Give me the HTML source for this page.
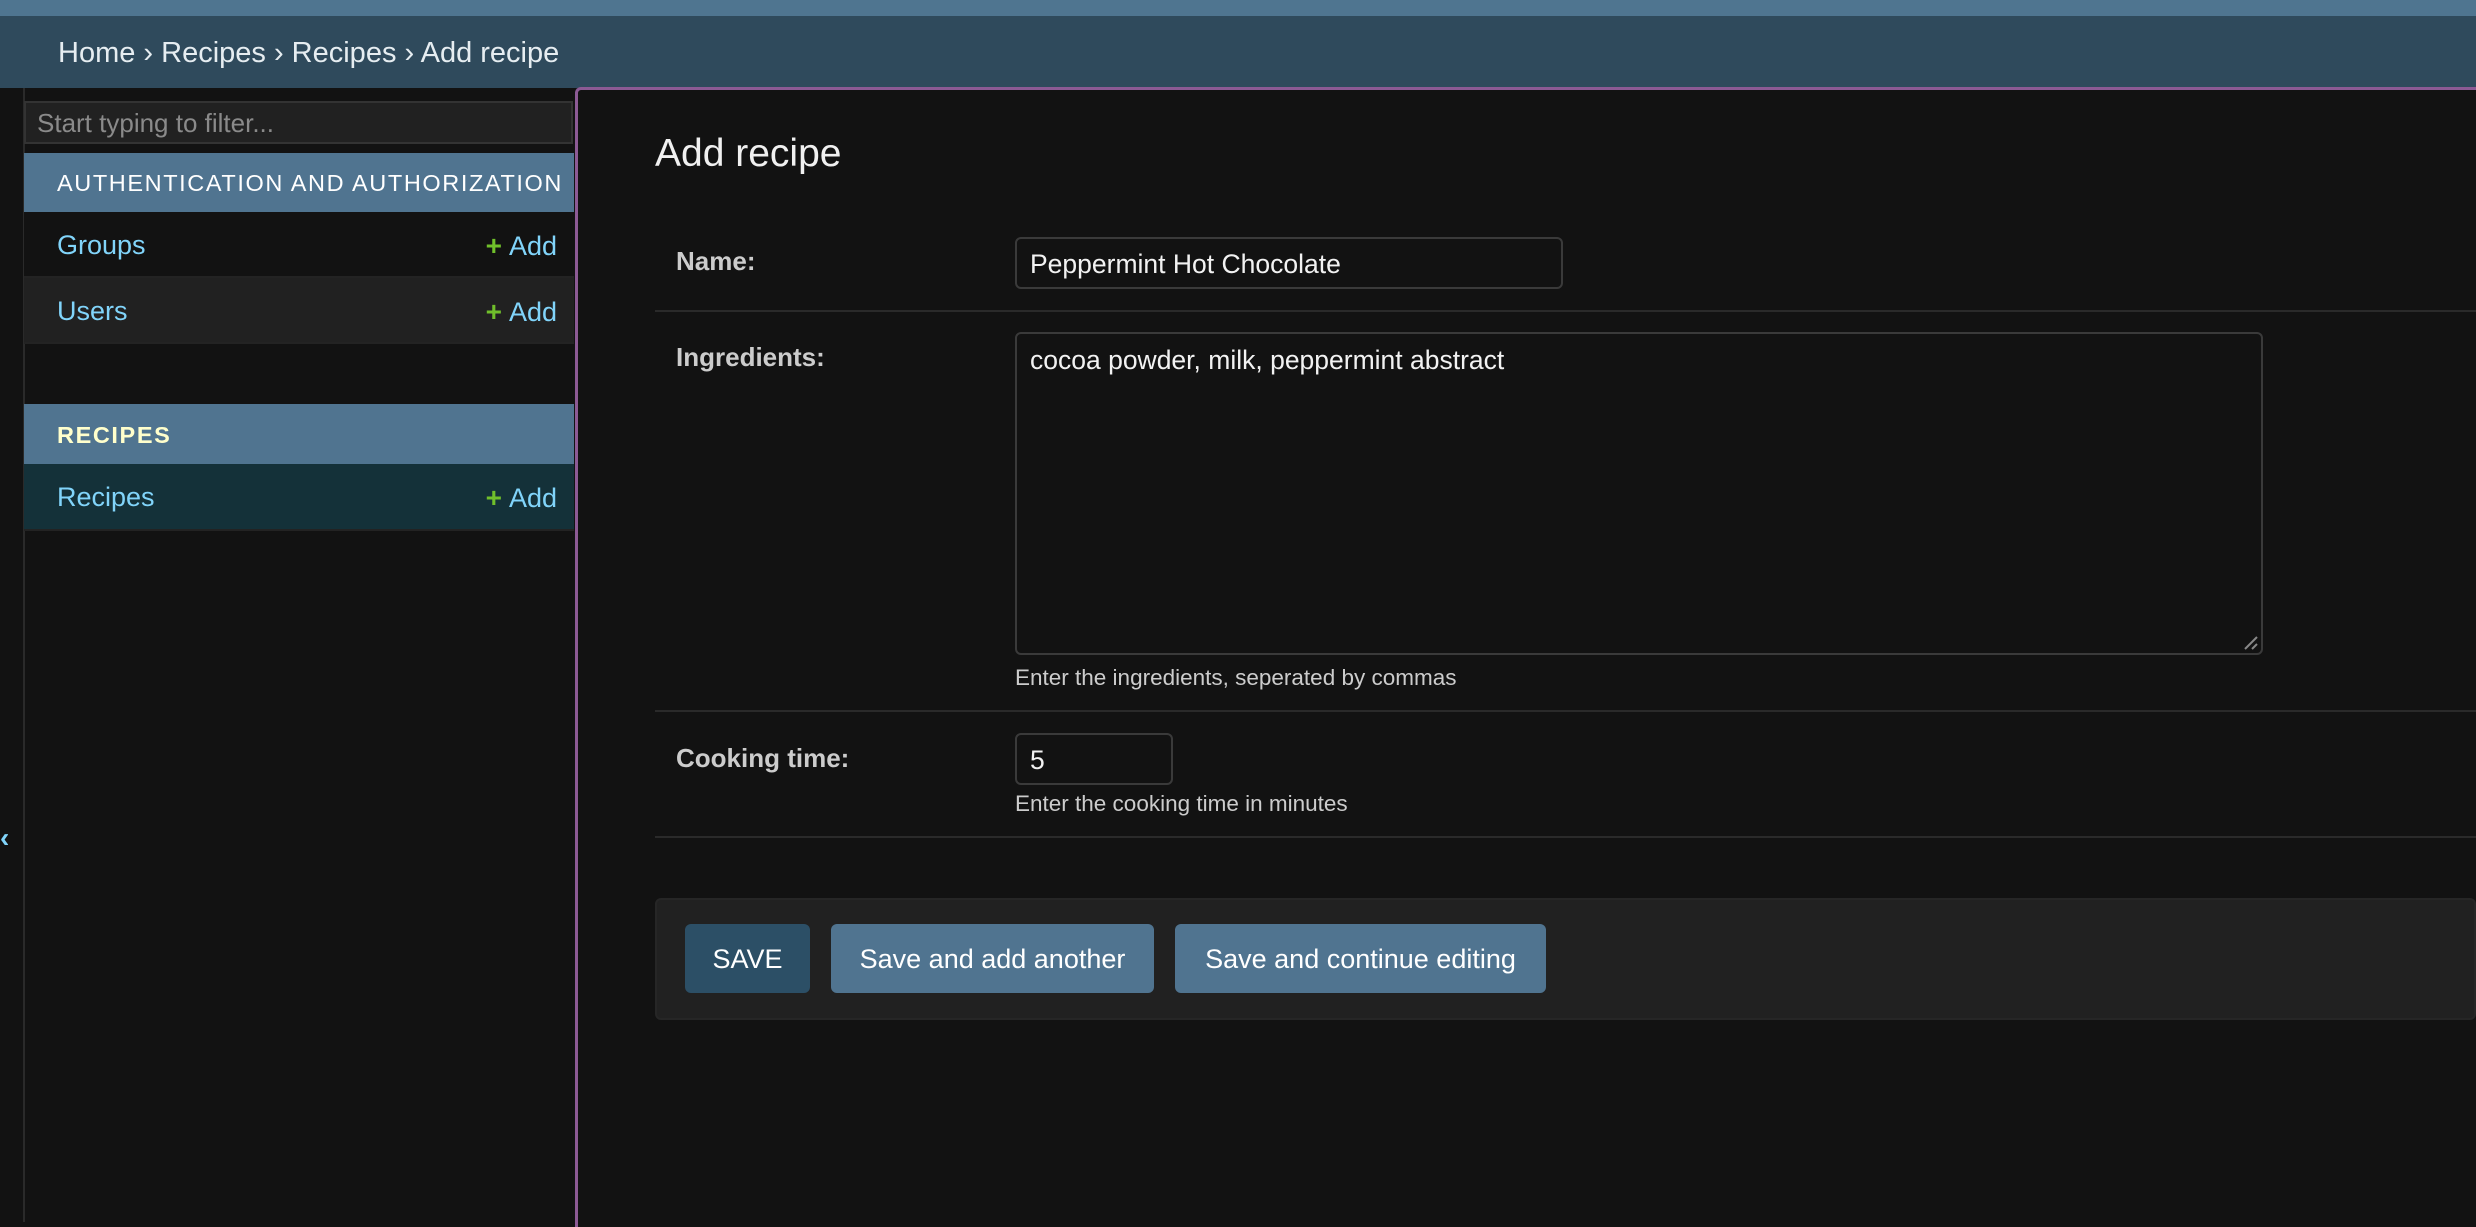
<!DOCTYPE html>
<html><head><meta charset="utf-8">
<style>
*{box-sizing:border-box;margin:0;padding:0}
html,body{width:2476px;height:1222px;overflow:hidden;background:#121212;font-family:"Liberation Sans",sans-serif;color:#eee}
.abs{position:absolute}
.top{left:0;top:0;width:2476px;height:16px;background:#4f7590}
.crumbs{left:0;top:16px;width:2476px;height:72px;background:#2f4a5c;color:#e6edf1;font-size:29px;line-height:74px;padding-left:58px}
.vline{left:23px;top:88px;width:2px;height:1134px;background:#2a2a2a}
.filter{left:24px;top:101px;width:549px;height:43px;background:#212121;border:2px solid #333;color:#8a8a8a;font-size:26px;line-height:41px;padding-left:11px}
.hdr{left:24px;width:550px;background:#507490;color:#fff;font-size:23.5px;letter-spacing:1.6px;padding-left:33px}
.row{left:24px;width:550px;font-size:27px;color:#81d4fa;padding-left:33px;border-bottom:2px solid #232323}
.row .add{position:absolute;right:17px;top:0;color:#81d4fa}
.row .add b{color:#70bf2b;font-size:28px;font-weight:bold;margin-right:7px;position:relative;top:0}
.main{left:575px;top:87px;width:1910px;height:1140px;border-left:3px solid #8c5a94;border-top:3px solid #8c5a94;border-top-left-radius:6px;background:#121212}
h1{position:absolute;left:655px;top:132px;font-size:39px;font-weight:normal;color:#f0f0f0}
.lbl{position:absolute;left:676px;font-size:26px;font-weight:bold;color:#ccc}
.inp{position:absolute;border:2px solid #3a3a3a;border-radius:6px;background:#121212;color:#f2f2f2;font-size:26.5px;padding-left:13px}
.help{position:absolute;left:1015px;font-size:22.5px;color:#ccc}
.div{position:absolute;left:655px;width:1821px;height:2px;background:#2a2a2a}
.submit{left:655px;top:898px;width:1821px;height:122px;background:#212121;border-radius:6px;border:2px solid #262626}
.btn{position:absolute;top:924px;height:69px;border-radius:6px;background:#507490;color:#fff;font-size:27px;line-height:71px;text-align:center}
</style></head><body>
<div class="abs top"></div>
<div class="abs crumbs">Home › Recipes › Recipes › Add recipe</div>
<div class="abs vline"></div>
<div class="abs" style="left:0;top:822px;color:#81d4fa;font-size:28px;font-weight:bold">‹</div>
<div class="abs filter">Start typing to filter...</div>
<div class="abs hdr" style="top:153px;height:59px;line-height:61px">AUTHENTICATION AND AUTHORIZATION</div>
<div class="abs row" style="top:212px;height:66px;line-height:67px;background:#121212">Groups<span class="add"><b>+</b>Add</span></div>
<div class="abs row" style="top:278px;height:66px;line-height:67px;background:#212121">Users<span class="add"><b>+</b>Add</span></div>
<div class="abs hdr" style="top:404px;height:60px;line-height:62px;color:#ffffcc;font-weight:bold">RECIPES</div>
<div class="abs row" style="top:464px;height:67px;line-height:67px;background:#143139">Recipes<span class="add"><b>+</b>Add</span></div>

<div class="abs main"></div>
<h1>Add recipe</h1>
<div class="lbl" style="top:246px">Name:</div>
<div class="inp" style="left:1015px;top:237px;width:548px;height:52px;line-height:50px">Peppermint Hot Chocolate</div>
<div class="div" style="top:310px"></div>
<div class="lbl" style="top:342px">Ingredients:</div>
<div class="inp" style="left:1015px;top:332px;width:1248px;height:323px;padding-top:11px;line-height:30px">cocoa powder, milk, peppermint abstract
<svg style="position:absolute;right:3px;bottom:3px" width="14" height="14"><path d="M1 13L13 1M8 13L13 8" stroke="#888" stroke-width="2"/></svg></div>
<div class="help" style="top:665px">Enter the ingredients, seperated by commas</div>
<div class="div" style="top:710px"></div>
<div class="lbl" style="top:743px">Cooking time:</div>
<div class="inp" style="left:1015px;top:733px;width:158px;height:52px;line-height:50px">5</div>
<div class="help" style="top:791px">Enter the cooking time in minutes</div>
<div class="div" style="top:836px"></div>
<div class="abs submit"></div>
<div class="btn" style="left:685px;width:125px;background:#2c4f66">SAVE</div>
<div class="btn" style="left:831px;width:323px">Save and add another</div>
<div class="btn" style="left:1175px;width:371px">Save and continue editing</div>
</body></html>
